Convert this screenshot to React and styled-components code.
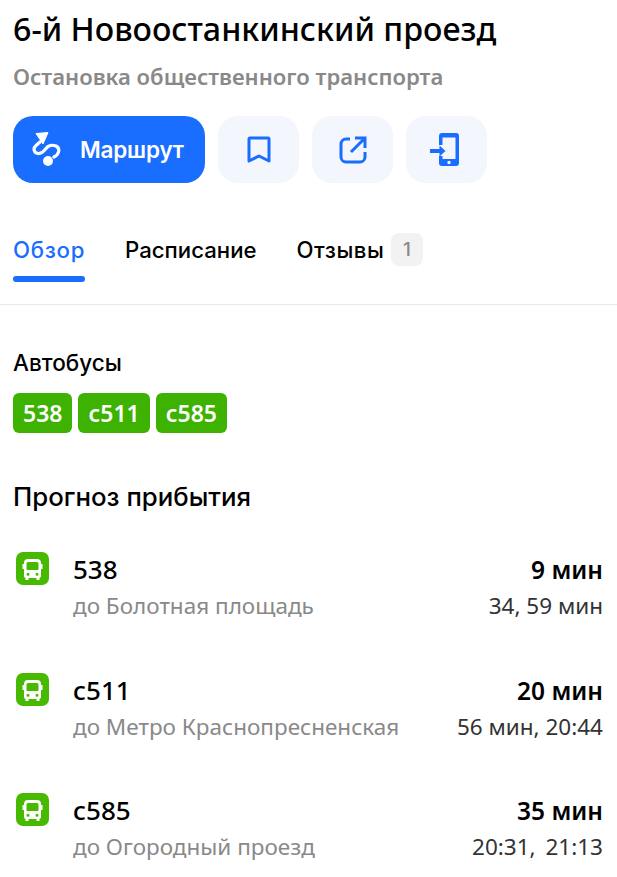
import React from "react";
import styled, { createGlobalStyle } from "styled-components";

const Global = createGlobalStyle`
  html, body { margin: 0; padding: 0; background: #fff; }
  body { font-family: "Noto Sans", "Open Sans", sans-serif; color: #000; }
  * { box-sizing: border-box; }
`;
const Page = styled.div`width: 617px; height: 877px; overflow: hidden; background: #fff;`;
const Header = styled.header`padding: 9px 13px 0 13px;`;
const Title = styled.h1`margin: 0; font: 500 32.2px/40px "Noto Sans", sans-serif; color: #000;`;
const Subtitle = styled.div`margin-top: 15px; font: 600 22.1px/24px "Noto Sans", sans-serif; color: #898989;`;
const Actions = styled.div`display: flex; gap: 13px; margin-top: 28px;`;
const RouteButton = styled.button`
  width: 192px; height: 67px; border: 0; border-radius: 20px; background: #196dff; color: #fff;
  display: flex; align-items: center; padding: 0 0 0 19px; gap: 18px;
  font: 600 22.5px Inter, sans-serif; letter-spacing: -0.2px;
`;
const IconButton = styled.button`
  width: 81px; height: 67px; border: 0; border-radius: 20px; background: #f3f6fd;
  display: flex; align-items: center; justify-content: center; padding: 0; color: #196dff;
`;
const Tabs = styled.nav`
  display: flex; gap: 40px; margin-top: 38px; padding: 0 13px; height: 84px; border-bottom: 1px solid #e8e8e8;
`;
const Tab = styled.div`
  position: relative; height: 61px; display: flex; align-items: flex-start; gap: 7px;
  font: 500 22.2px/58px Inter, sans-serif; color: ${p => p.$active ? "#196dff" : "#000"};
  letter-spacing: ${p => p.$track || 0}px;
`;
const Underline = styled.span`position: absolute; left: 0; right: 0; bottom: 0; height: 6px; border-radius: 3px; background: #196dff;`;
const Count = styled.span`
  margin-top: 12px; width: 32px; height: 33px; border-radius: 8px; background: #f2f2f2; color: #898989;
  display: flex; align-items: center; justify-content: center; font: 500 19px Inter, sans-serif;
`;
const Section = styled.section`padding: 0 13px;`;
const SectionTitle = styled.h2`margin: 0; font: 500 ${p => p.$size}px/28px Inter, sans-serif; color: #000;`;
const Buses = styled(Section)`padding-top: 44px;`;
const BadgeRow = styled.div`display: flex; gap: 6px; margin-top: 16px;`;
const Badge = styled.div`
  height: 40px; padding: 0 ${p => p.$pad}px; border-radius: 6px; background: #3db200; color: #fff;
  font: 600 23px/40px "Noto Sans", sans-serif;
`;
const Forecast = styled(Section)`padding-top: 50px;`;
const Arrivals = styled.div`display: flex; flex-direction: column; gap: 46.5px; margin-top: 41px;`;
const Row = styled.div`display: flex; align-items: flex-start; height: 74px;`;
const BusIcon = styled.svg`flex: none; width: 33px; height: 33px; margin-left: 3px;`;
const Info = styled.div`margin-left: 24px; flex: 1;`;
const Number = styled.div`font: 500 26px/34px "Noto Sans", sans-serif; color: #000;`;
const Dest = styled.div`margin-top: 5px; font: 400 22.5px/30px "Noto Sans", sans-serif; color: #898989;`;
const Times = styled.div`text-align: right; margin-right: 1px;`;
const Primary = styled.div`font: 600 24.5px/35px "Noto Sans", sans-serif;`;
const Secondary = styled.div`margin-top: 4px; font: 400 22.5px/30px "Noto Sans", sans-serif; color: #333; word-spacing: ${p => p.$wide}px;`;

const Bus = () => (
  <BusIcon viewBox="0 0 33 33">
    <rect width="33" height="33" rx="7" fill="#46b900" />
    <path fillRule="evenodd" fill="#fff" d="M12 7h9a4 4 0 0 1 4 4v1h1.500v5H25v7a2 2 0 0 1-1.500 2v2h-3v-2h-8v2h-3v-2A2 2 0 0 1 8 24v-7H6.500v-5H8v-1a4 4 0 0 1 4-4Zm0 3a1.500 1.500 0 0 0-1.500 1.500V17a1 1 0 0 0 1 1h10a1 1 0 0 0 1-1v-5.500A1.500 1.500 0 0 0 21 10H12Zm0 10.700a1.500 1.500 0 1 0 0 3 1.500 1.500 0 0 0 0-3Zm9 0a1.500 1.500 0 1 0 0 3 1.500 1.500 0 0 0 0-3Z" />
  </BusIcon>
);

const items = [
  ["538", "до Болотная площадь", "9 мин", "34, 59 мин", 0],
  ["с511", "до Метро Краснопресненская", "20 мин", "56 мин, 20:44", 0],
  ["с585", "до Огородный проезд", "35 мин", "20:31, 21:13", 4],
];

export default function App() {
  return (
    <Page>
      <Global />
      <Header>
        <Title>6-й Новоостанкинский проезд</Title>
        <Subtitle>Остановка общественного транспорта</Subtitle>
        <Actions>
          <RouteButton>
            <svg width="30" height="35" viewBox="0 0 30 35" fill="none">
              <path d="M4 1.500L16 .5 11 12z" fill="#fff" stroke="#fff" strokeWidth="1" strokeLinejoin="round" />
              <path d="M8 10L4 13.500C1 16 1.500 21 6 21.500C10 22 12 19 14 16.500C16 13.500 20 12.500 24 14C28 16 28 22 22 25" stroke="#fff" strokeWidth="3.200" strokeLinecap="round" />
              <circle cx="16" cy="29" r="5" fill="#fff" />
            </svg>
            Маршрут
          </RouteButton>
          <IconButton aria-label="bookmark">
            <svg width="24" height="28" viewBox="0 0 24 28" fill="none">
              <path d="M2 3a1 1 0 0 1 1-1h18a1 1 0 0 1 1 1v22l-10-5-10 5z" stroke="currentColor" strokeWidth="3" strokeLinejoin="round" />
            </svg>
          </IconButton>
          <IconButton aria-label="share">
            <svg width="28" height="28" viewBox="0 0 28 28" fill="none" stroke="currentColor" strokeWidth="3">
              <path d="M11 3H7a5 5 0 0 0-5 5v13a5 5 0 0 0 5 5h14a5 5 0 0 0 5-5v-5" />
              <path d="M12 16L25 3M16 2h10v10" />
            </svg>
          </IconButton>
          <IconButton aria-label="to phone">
            <svg width="34" height="34" viewBox="0 0 34 34">
              <path fillRule="evenodd" fill="currentColor" d="M12 0h14a3 3 0 0 1 3 3v27a3 3 0 0 1-3 3H12a3 3 0 0 1-3-3v-7h3.500v3h13V4.500h-13V12H9V3a3 3 0 0 1 3-3ZM19 27.800a1.700 1.700 0 1 0 0 3.400 1.700 1.700 0 0 0 0-3.400Z" />
              <path fill="currentColor" d="M0 16h9.500v-3.500L15.500 18l-6 5.500V20H0z" />
            </svg>
          </IconButton>
        </Actions>
      </Header>
      <Tabs>
        <Tab $active $track={0.7}>Обзор<Underline /></Tab>
        <Tab>Расписание</Tab>
        <Tab $track={0.5}>Отзывы<Count>1</Count></Tab>
      </Tabs>
      <Buses>
        <SectionTitle $size={22.5}>Автобусы</SectionTitle>
        <BadgeRow>
          <Badge $pad={10}>538</Badge><Badge $pad={10}>с511</Badge><Badge $pad={10}>с585</Badge>
        </BadgeRow>
      </Buses>
      <Forecast>
        <SectionTitle $size={25.8}>Прогноз прибытия</SectionTitle>
        <Arrivals>
          {items.map(([n, d, t, s, w]) => (
            <Row key={n}>
              <Bus />
              <Info><Number>{n}</Number><Dest>{d}</Dest></Info>
              <Times><Primary>{t}</Primary><Secondary $wide={w}>{s}</Secondary></Times>
            </Row>
          ))}
        </Arrivals>
      </Forecast>
    </Page>
  );
}
